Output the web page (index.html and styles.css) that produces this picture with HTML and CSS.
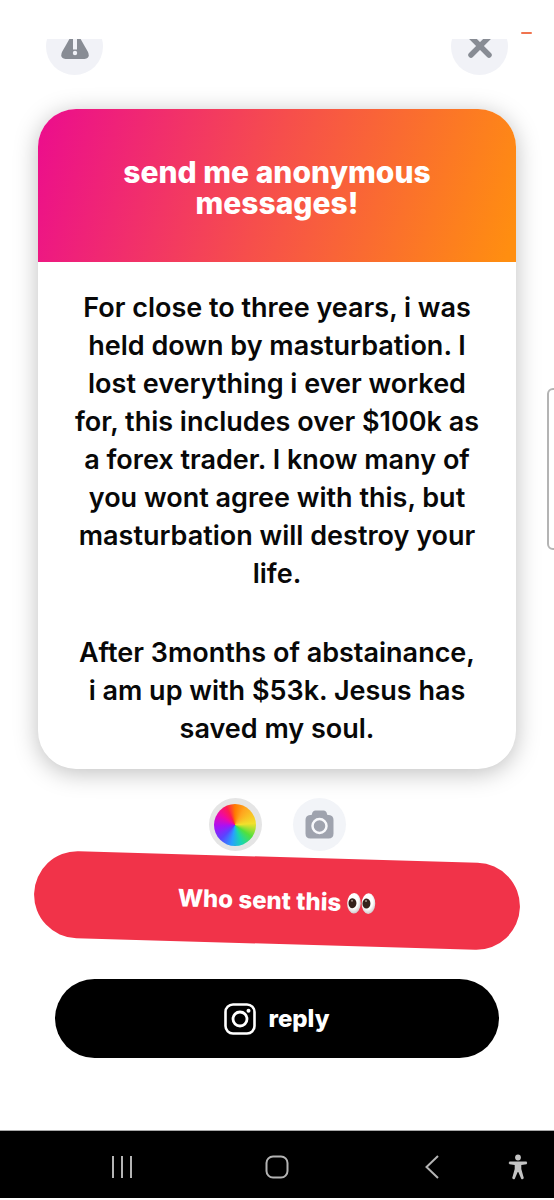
FILE: index.html
```html
<!DOCTYPE html>
<html lang="en">
<head>
<meta charset="utf-8">
<meta name="viewport" content="width=device-width, initial-scale=1">
<title>Anonymous message</title>
<link rel="stylesheet" href="styles.css">
</head>
<body>
<div class="status"><span class="status-mark"></span></div>
<header class="topbar">
  <button class="round round-top" type="button" aria-label="Report">
    <svg width="28" height="26" viewBox="0 0 28 26" aria-hidden="true"><path d="M10 2.200Q14 -1.500 18 2.200L27 18Q29.500 24.500 23.500 25H4.500Q-1.500 24.500 1 18Z" fill="#888c94"/><path d="M14 4v11.500" stroke="#f1f2f7" stroke-width="4"/><circle cx="14" cy="19" r="2.200" fill="#f1f2f7"/></svg>
  </button>
  <button class="round round-top" type="button" aria-label="Close">
    <svg width="26" height="26" viewBox="0 0 26 26" aria-hidden="true"><path d="M4 3l18 18M22 3L4 21" stroke="#888c94" stroke-width="5.500" stroke-linecap="round"/></svg>
  </button>
</header>
<main class="main">
  <article class="card">
    <h1 class="card-title">send me anonymous messages!</h1>
    <div class="card-body">
      <p>For close to three years, i was held down by masturbation. I lost everything i ever worked for, this includes over $100k as a forex trader. I know many of you wont agree with this, but masturbation will destroy your life.</p>
      <p>After 3months of abstainance, i am up with $53k. Jesus has saved my soul.</p>
    </div>
  </article>
  <div class="tools">
    <button class="round round-color" type="button" aria-label="Change color"><span class="wheel"></span></button>
    <button class="round" type="button" aria-label="Use camera">
      <svg width="29" height="29" viewBox="0 0 29 29" aria-hidden="true"><path d="M7 4Q7.500 .5 10.500 .5H18.500Q21.500 .5 22 4L22.500 5H24Q28.500 5.500 28.500 10V23.500Q28.500 28.500 23.500 28.500H5.500Q.5 28.500 .5 23.500V10Q.5 5.500 5 5H6.500Z" fill="#9fa3ae"/><circle cx="14.500" cy="16" r="7" fill="none" stroke="#f8f9fc" stroke-width="2.500"/></svg>
    </button>
  </div>
  <button class="pill pill-who" type="button">
    <span>Who sent this</span>
    <svg width="29" height="22" viewBox="0 0 29 22" role="img" aria-label="eyes"><defs><radialGradient id="eye" cx=".45" cy=".4" r=".6"><stop offset=".6" stop-color="#fff"/><stop offset="1" stop-color="#d0cdce"/></radialGradient></defs><ellipse cx="7" cy="11" rx="6.800" ry="10.300" fill="url(#eye)"/><ellipse cx="21.500" cy="11" rx="6.800" ry="10.300" fill="url(#eye)"/><ellipse cx="5.500" cy="11" rx="4" ry="5" fill="#35211b"/><ellipse cx="19.500" cy="11" rx="4" ry="5" fill="#35211b"/><circle cx="5" cy="8.500" r="1" fill="#a18e86"/><circle cx="19" cy="8.500" r="1" fill="#a18e86"/></svg>
  </button>
  <button class="pill pill-reply" type="button">
    <svg width="32" height="32" viewBox="0 0 32 32" fill="none" stroke="#fff" aria-hidden="true"><rect x="1.500" y="1.500" width="29" height="29" rx="7.500" stroke-width="2.600"/><circle cx="16" cy="16" r="7" stroke-width="2.800"/><circle cx="24.500" cy="7.700" r="2" fill="#fff" stroke="none"/></svg>
    <span>reply</span>
  </button>
</main>
<nav class="navbar" aria-label="System navigation">
  <button class="nav-btn" type="button" aria-label="Recent apps"><svg width="24" height="24" viewBox="0 0 24 24" aria-hidden="true"><path d="M3 1v22M12 1v22M21 1v22" stroke="#b4b4b4" stroke-width="2"/></svg></button>
  <button class="nav-btn" type="button" aria-label="Home"><svg width="24" height="24" viewBox="0 0 24 24" aria-hidden="true"><rect x="1.500" y="1.500" width="21" height="21" rx="6.500" fill="none" stroke="#b4b4b4" stroke-width="2"/></svg></button>
  <button class="nav-btn" type="button" aria-label="Back"><svg width="24" height="24" viewBox="0 0 24 24" aria-hidden="true"><path d="M18 1L6.500 12L18 23" fill="none" stroke="#b4b4b4" stroke-width="2"/></svg></button>
  <button class="nav-btn nav-access" type="button" aria-label="Accessibility"><svg width="20" height="26" viewBox="0 0 20 26" aria-hidden="true"><g fill="#c4c4c4"><circle cx="10" cy="3.500" r="2.900"/><path d="M1.500 7.500H18.500Q20 9 18.500 10.300L13.300 11V15L15.800 24Q14.800 26 13.300 25L10.300 18H9.700L6.700 25Q5.200 26 4.200 24L6.700 15V11L1.500 10.300Q0 9 1.500 7.500Z"/></g></svg></button>
</nav>
<span class="edge-handle"></span>
</body>
</html>
```
FILE: styles.css
```css
* { box-sizing: border-box; }

body {
  margin: 0;
  min-height: 100vh;
  display: flex;
  flex-direction: column;
  position: relative;
  overflow-x: hidden;
  background: #fff;
  color: #080808;
  font-family: Inter, "Liberation Sans", sans-serif;
}

button {
  border: 0;
  padding: 0;
  font: inherit;
  cursor: pointer;
}

.status {
  height: 39px;
  display: flex;
  justify-content: flex-end;
  align-items: flex-end;
  padding: 0 22px 5px;
}

.status-mark {
  width: 11px;
  height: 2px;
  border-radius: 1px;
  background: #f0744f;
}

.topbar {
  height: 36px;
  padding: 0 46px;
  display: flex;
  justify-content: space-between;
  align-items: flex-end;
  overflow: hidden;
}

.round {
  width: 53px;
  height: 53px;
  flex: none;
  display: flex;
  align-items: center;
  justify-content: center;
  border-radius: 50%;
  background: #f2f4f8;
}

.round-top {
  width: 57px;
  height: 57px;
  background: #f1f2f7;
}

.round-color { background: #e5e5e5; }

.wheel {
  width: 42px;
  height: 42px;
  border-radius: 50%;
  background: conic-gradient(#ff7a00, #ffa51f 30deg, #f2e02c 85deg, #52e03c 125deg, #19d6b0 160deg, #28a0ff 190deg, #5b43ff 225deg, #a811f5 265deg, #ee08a8 305deg, #ff1c50 335deg, #ff7a00);
}

.main {
  flex: 1;
  display: flex;
  flex-direction: column;
  align-items: center;
  padding: 34px 34px 72px;
}

.card {
  align-self: stretch;
  margin: 0 4px;
  border-radius: 38px;
  overflow: hidden;
  background: #fff;
  box-shadow: 0 4px 24px rgba(0, 0, 0, 0.26);
}

.card-title {
  margin: 0;
  padding: 48px 60px 43px;
  background: linear-gradient(107deg, #ec0f8b 2%, #f64e4c 48%, #ff8e10 98%);
  color: #fff;
  text-align: center;
  font-size: 30px;
  line-height: 31px;
  font-weight: 800;
}

.card-body {
  padding: 27px 35px 21px;
  text-align: center;
  font-size: 27px;
  line-height: 38px;
  font-weight: 600;
}

.card-body p { margin: 0; }
.card-body p + p { margin-top: 41px; }

.tools {
  display: flex;
  gap: 31px;
  margin-top: 29px;
}

.pill {
  display: flex;
  align-items: center;
  justify-content: center;
  border-radius: 44px;
  color: #fff;
  font-size: 24px;
  font-weight: 800;
}

.pill-who {
  align-self: stretch;
  height: 87px;
  gap: 6px;
  margin-top: 6px;
  background: #f13349;
  transform: rotate(1.65deg);
}

.pill-reply {
  align-self: stretch;
  height: 79px;
  margin: 35px 21px 0;
  gap: 12px;
  background: #000;
}

.navbar {
  position: relative;
  height: 68px;
  margin-bottom: 2px;
  padding: 4px 44px 0;
  display: grid;
  grid-template-columns: repeat(3, 1fr);
  border-top: 1px solid #a8a8a8;
  background: #000;
}

.nav-btn {
  display: flex;
  align-items: center;
  justify-content: center;
  background: none;
}

.nav-access {
  position: absolute;
  top: 4px;
  right: 24px;
  bottom: 0;
  width: 24px;
}

.edge-handle {
  position: absolute;
  top: 388px;
  right: -6px;
  width: 13px;
  height: 162px;
  border: 2px solid #b4b4b4;
  border-radius: 6px;
  background: #fff;
}
```
